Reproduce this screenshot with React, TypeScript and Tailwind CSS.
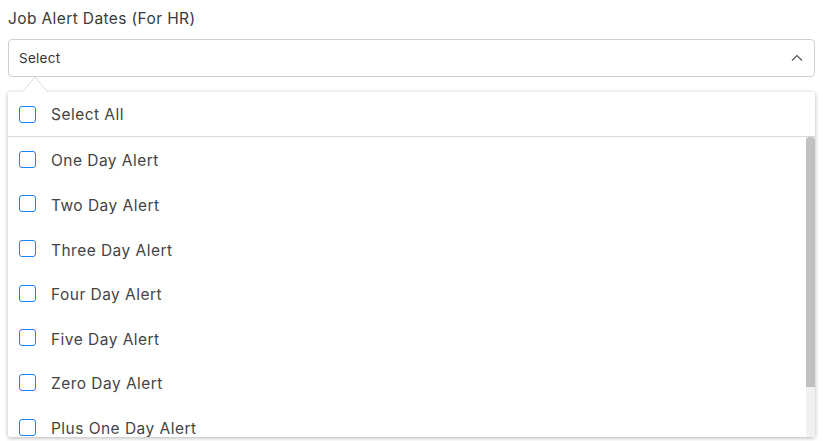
const OPTIONS = [
  "One Day Alert",
  "Two Day Alert",
  "Three Day Alert",
  "Four Day Alert",
  "Five Day Alert",
  "Zero Day Alert",
  "Plus One Day Alert",
  "Plus Two Day Alert",
];

function Box() {
  return <span className="h-[17px] w-[17px] shrink-0 rounded-[3px] border-[1.5px] border-[#1a82f7] bg-white" />;
}

export default function App() {
  return (
    <div
      className="h-[441px] w-[823px] overflow-hidden bg-white px-2 pt-[7px] text-[#444]"
      style={{ fontFamily: "Inter, 'Noto Sans', sans-serif" }}
    >
      <label className="block pt-[1px] text-[15.5px] leading-[22px] tracking-[0.025em] text-[#3a3a3a]">
        Job Alert Dates (For HR)
      </label>
      <div className="mt-[9px] flex h-[38px] w-[807px] items-center justify-between rounded-[4px] border border-[#cfcfcf] pl-[10px] pr-[10px]">
        <span className="text-[13.5px] tracking-[0.02em] text-[#333]">Select</span>
        <svg width="14" height="14" viewBox="0 0 14 14" fill="none" stroke="#555" strokeWidth="1.2">
          <path d="M2 9.5 L7 4.5 L12 9.5" />
        </svg>
      </div>
      <div className="relative mt-[15px] w-[807px] rounded-[2px] bg-white shadow-[0_1px_4px_rgba(0,0,0,0.3)]">
        <svg className="absolute -top-[16px] left-[14px]" width="26" height="17" viewBox="0 0 26 17">
          <path d="M0 16.5 L13 1 L26 16.5" fill="white" stroke="#dcdcdc" strokeWidth="1" />
        </svg>
        <div className="flex h-[45px] items-center gap-[15px] border-b border-[#d9d9d9] pl-[11px]">
          <Box />
          <span className="pt-[2px] text-[15.5px] tracking-[0.03em]">Select All</span>
        </div>
        <div className="flex h-[300px]">
          <div className="flex-1 overflow-hidden">
            {OPTIONS.map((o) => (
              <div key={o} className="flex h-[44.67px] items-center gap-[15px] pl-[11px]">
                <Box />
                <span className="pt-[3px] text-[15.5px] tracking-[0.03em]">{o}</span>
              </div>
            ))}
          </div>
          <div className="w-[9px] bg-[#f1f1f1]">
            <div className="h-[250px] rounded-t-[4px] bg-[#c1c1c1]" />
          </div>
        </div>
      </div>
    </div>
  );
}
